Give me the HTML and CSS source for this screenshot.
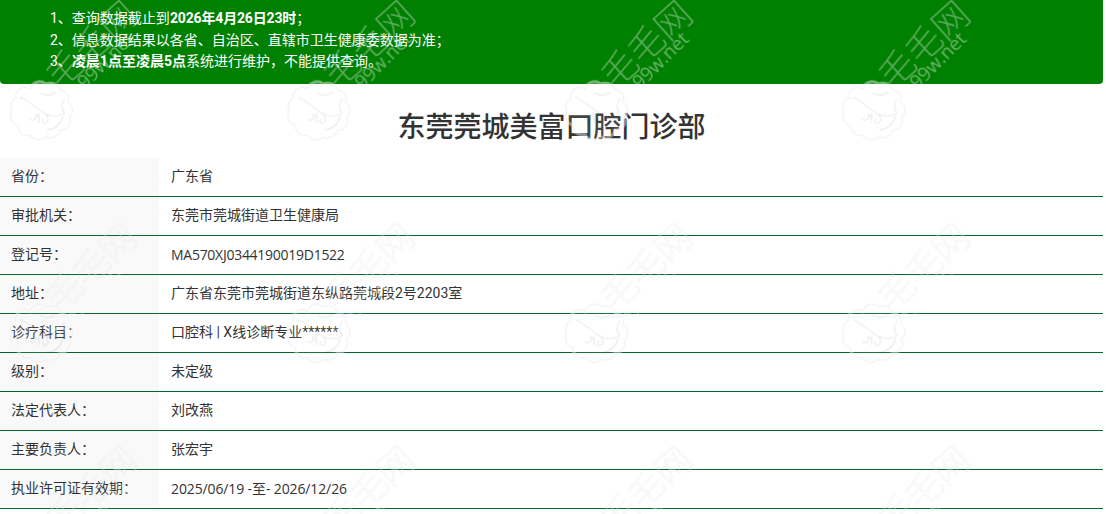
FILE: index.html
```html
<!DOCTYPE html>
<html lang="zh-CN">
<head>
<meta charset="utf-8">
<title>东莞莞城美富口腔门诊部</title>
<link rel="stylesheet" href="styles.css">
</head>
<body>
<div class="page">
  <div class="notice">
    <ol class="notice-list">
      <li>1、查询数据截止到<b class="notice-date">2026年4月26日23时</b>；</li>
      <li>2、信息数据结果以各省、自治区、直辖市卫生健康委数据为准；</li>
      <li>3、<b>凌晨1点至凌晨5点</b>系统进行维护，不能提供查询。</li>
    </ol>
  </div>
  <h1 class="title">东莞莞城美富口腔门诊部</h1>
  <div class="rows">
    <div class="row"><div class="label">省份：</div><div class="value">广东省</div></div>
    <div class="row"><div class="label">审批机关：</div><div class="value">东莞市莞城街道卫生健康局</div></div>
    <div class="row"><div class="label">登记号：</div><div class="value code">MA570XJ0344190019D1522</div></div>
    <div class="row"><div class="label">地址：</div><div class="value">广东省东莞市莞城街道东纵路莞城段2号2203室</div></div>
    <div class="row"><div class="label">诊疗科目：</div><div class="value">口腔科 | X线诊断专业******</div></div>
    <div class="row"><div class="label">级别：</div><div class="value">未定级</div></div>
    <div class="row"><div class="label">法定代表人：</div><div class="value">刘改燕</div></div>
    <div class="row"><div class="label">主要负责人：</div><div class="value">张宏宇</div></div>
    <div class="row"><div class="label">执业许可证有效期：</div><div class="value dates">2025/06/19 -至- 2026/12/26</div></div>
  </div>
</div>
<svg class="watermark" width="1106" height="514" aria-hidden="true">
  <defs>
    <pattern id="wm" x="0" y="0" width="277.5" height="222.5" patternUnits="userSpaceOnUse">
      <g transform="translate(41 110)">
        <path class="wm-halo" d="M-11 -21A10 10 0 0 1 5 -26A10 9 0 0 1 19 -20A9 9 0 0 1 27 -8A9 9 0 0 1 28 7A9 9 0 0 1 19 20A10 9 0 0 1 5 27A10 9 0 0 1 -11 25A10 9 0 0 1 -23 15A9 9 0 0 1 -29 1A9 9 0 0 1 -25 -12A9 9 0 0 1 -11 -21Z"/>
        <path class="wm-outline" d="M-11 -21A10 10 0 0 1 5 -26A10 9 0 0 1 19 -20A9 9 0 0 1 27 -8A9 9 0 0 1 28 7A9 9 0 0 1 19 20A10 9 0 0 1 5 27A10 9 0 0 1 -11 25A10 9 0 0 1 -23 15A9 9 0 0 1 -29 1A9 9 0 0 1 -25 -12A9 9 0 0 1 -11 -21Z"/>
        <path class="wm-line" d="M-21 -13C-12 -10 -6 -2 3 3C10 7 18 7 24 3M-1 -17C5 -14 10 -14 14 -18M24 -12C20 -6 20 0 24 3M-11 9A3 3 0 1 0 -6 4L-1 8M-2 3L-2 13M4 4C8 6 8 12 4 13A2 2 0 0 1 3 9M22 6C20 14 14 19 6 20"/>
      </g>
      <g transform="translate(92 45) rotate(-42)">
        <text class="wm-name" x="0" y="12">毛毛网</text>
      </g>
      <g transform="translate(135 40) rotate(-45)">
        <text class="wm-url" x="0" y="0">mm99w.net</text>
      </g>
    </pattern>
  </defs>
  <rect class="wm-fill" width="1106" height="514"/>
</svg>
</body>
</html>
```
FILE: styles.css
```css
html, body {
  margin: 0;
  padding: 0;
  background: #fff;
  overflow: hidden;
}
body {
  font-family: Roboto, "Noto Sans CJK SC", sans-serif;
  font-size: 14px;
  color: #333;
}
.page {
  width: 1103px;
}
.notice {
  height: 84px;
  box-sizing: border-box;
  padding: 8.4px 0 0 50px;
  background: #008000;
  border-radius: 0 0 4px 4px;
  color: #fff;
}
.notice-list {
  list-style: none;
  margin: 0;
  padding: 0;
  line-height: 21.5px;
}
.notice-list b {
  font-weight: 700;
}
.notice-list .notice-date {
  letter-spacing: -0.15px;
}
.title {
  margin: 0;
  height: 50px;
  padding-top: 24px;
  line-height: 40px;
  text-align: center;
  font-size: 28px;
  font-weight: 500;
  color: #333;
}
.row {
  display: flex;
  height: 38px;
  border-bottom: 1px solid #006633;
  line-height: 37px;
}
.label {
  width: 148px;
  padding-left: 11px;
  background: #f9f9f9;
}
.value {
  padding-left: 12px;
}
.code {
  font-family: "Open Sans", "Noto Sans CJK SC", sans-serif;
  letter-spacing: -0.27px;
}
.dates {
  font-family: "Open Sans", "Noto Sans CJK SC", sans-serif;
  letter-spacing: -0.12px;
}
.watermark {
  position: absolute;
  left: 0;
  top: 0;
  pointer-events: none;
}
.wm-fill {
  fill: url(#wm);
}
.wm-halo {
  fill: none;
  stroke: #fff;
  stroke-opacity: 0.45;
  stroke-width: 3;
}
.wm-outline {
  fill: #fff;
  fill-opacity: 0.08;
  stroke: #000;
  stroke-opacity: 0.05;
  stroke-width: 1.2;
}
.wm-line {
  fill: none;
  stroke: #000;
  stroke-opacity: 0.07;
  stroke-width: 1.2;
}
.wm-name {
  font-family: "Noto Sans CJK SC", sans-serif;
  font-size: 36px;
  font-weight: 300;
  text-anchor: middle;
  fill: #fff;
  fill-opacity: 0.35;
  stroke: #000;
  stroke-width: 0.6;
  stroke-opacity: 0.06;
}
.wm-url {
  font-family: "Open Sans", sans-serif;
  font-size: 19px;
  text-anchor: end;
  fill: #fff;
  fill-opacity: 0.4;
}
```
